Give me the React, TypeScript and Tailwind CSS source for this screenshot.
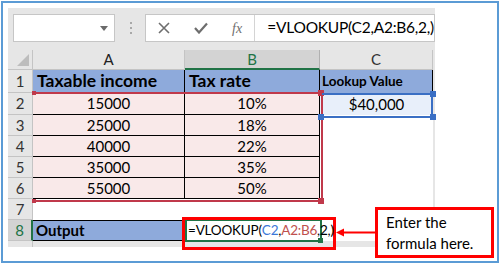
import React from "react";

const F = { fontFamily: "Lato, 'Open Sans', sans-serif" };

function Triangle() {
  return (
    <svg width="8" height="5" viewBox="0 0 8 5">
      <polygon points="0,0 8,0 4,5" fill="#6b6b6b" />
    </svg>
  );
}

export default function App() {
  const rows = [
    ["15000", "10%"],
    ["25000", "18%"],
    ["40000", "22%"],
    ["35000", "35%"],
    ["55000", "50%"],
  ];
  const rh = "bg-[#e6e6e6] border-r border-b border-[#c4c4c4] flex items-center justify-center text-[15px] text-[#333]";
  return (
    <div className="w-[502px] h-[268px] bg-white relative overflow-hidden" style={F}>
      <div className="ml-[1px] mt-[1px] w-[498px] h-[262px] border-2 border-[#5b9bd5] pl-[5px] pt-[5px]">
        <div className="w-[427px] h-[239px] bg-[#e6e6e6] flex flex-col">
          {/* formula bar */}
          <div className="h-[42px] flex items-start pt-[6px] pl-[5px] shrink-0">
            <div className="w-[102px] h-[28px] bg-white border border-[#c6c6c6] flex items-center justify-end pr-[6px]">
              <Triangle />
            </div>
            <div className="w-[30px] h-[28px] flex flex-col items-center justify-center gap-[3px] pl-[1px]">
              <span className="w-[2px] h-[2px] bg-[#a8a8a8]" />
              <span className="w-[2px] h-[2px] bg-[#a8a8a8]" />
              <span className="w-[2px] h-[2px] bg-[#a8a8a8]" />
            </div>
            <div className="w-[290px] h-[28px] bg-white border border-[#c6c6c6] flex">
              <div className="w-[112px] h-full border-r border-[#d4d4d4] relative">
                <svg className="absolute left-[12px] top-[7px]" width="12" height="12" viewBox="0 0 12 12">
                  <path d="M1 1 L11 11 M11 1 L1 11" stroke="#6e6e6e" strokeWidth="1.6" />
                </svg>
                <svg className="absolute left-[48px] top-[7px]" width="14" height="12" viewBox="0 0 14 12">
                  <path d="M1 6 L5 10.5 L13 1.5" stroke="#6e6e6e" strokeWidth="2.2" fill="none" />
                </svg>
                <span className="absolute left-[86px] top-[3px] italic text-[14px] text-[#6e6e6e]" style={{ fontFamily: "'Liberation Serif', serif" }}>
                  fx
                </span>
              </div>
              <div className="flex-1 pl-[12px] flex items-center text-[15.5px] tracking-[-0.25px] text-black whitespace-nowrap">
                =VLOOKUP(C2,A2:B6,2,)
              </div>
            </div>
          </div>
          {/* grid */}
          <div className="grid grid-cols-[25px_152px_135px_113px] grid-rows-[20px_23px_22px_21px_21px_21px_21px_21px_21px] shrink-0">
            {/* header row */}
            <div className="bg-[#e6e6e6] border-r border-b border-[#c4c4c4] relative">
              <svg className="absolute right-[3px] bottom-[3px]" width="12" height="12" viewBox="0 0 12 12">
                <polygon points="12,0 12,12 0,12" fill="#bdbdbd" />
              </svg>
            </div>
            <div className="bg-[#e6e6e6] border-r border-b border-[#c4c4c4] flex items-center justify-center text-[15px] text-[#222]">A</div>
            <div className="bg-[#d3d3d3] border-r border-[#b0b0b0] border-b-2 border-b-[#217346] flex items-center justify-center text-[15px] text-[#217346]">B</div>
            <div className="bg-[#e6e6e6] border-r border-b border-[#c4c4c4] flex items-center justify-center text-[15px] text-[#333]">C</div>

            {/* row 1 */}
            <div className={rh}>1</div>
            <div className="bg-[#8eaadb] border-r border-black flex items-center pl-[4px] font-bold text-[17.5px] text-black">Taxable income</div>
            <div className="bg-[#8eaadb] border-r border-black flex items-center pl-[4px] font-bold text-[17.5px] text-black">Tax rate</div>
            <div className="bg-[#8eaadb] border-r border-black flex items-center pl-[2px] font-bold text-[13.5px] text-black">Lookup Value</div>

            {rows.map((r, i) => (
              <React.Fragment key={i}>
                <div className={rh}>{i + 2}</div>
                <div className="bg-[#f9e9e9] border-r border-b border-black flex items-center justify-center text-[15px] text-black">{r[0]}</div>
                <div className="bg-[#f9e9e9] border-r border-b border-black flex items-center justify-center text-[15px] text-black">{r[1]}</div>
                {i === 0 ? (
                  <div className="bg-[#e8effa] flex items-center justify-center text-[15px] text-black">$40,000</div>
                ) : (
                  <div className="bg-white" />
                )}
              </React.Fragment>
            ))}

            {/* row 7 */}
            <div className={rh}>7</div>
            <div className="bg-white" />
            <div className="bg-white" />
            <div className="bg-white" />

            {/* row 8 */}
            <div className="bg-[#d3d3d3] border-r-2 border-r-[#217346] border-b border-[#c4c4c4] flex items-center justify-center text-[15px] text-[#217346]">8</div>
            <div className="bg-[#8eaadb] border-y border-black flex items-center pl-[3px] font-bold text-[15px] text-black">Output</div>
            <div className="bg-white relative">
              <div className="absolute left-[3px] top-0 h-full flex items-center whitespace-nowrap text-[13.5px] tracking-[-0.2px] text-black z-10">
                <span>=VLOOKUP(</span>
                <span className="text-[#3c78d8]">C2</span>
                <span>,</span>
                <span className="text-[#c0504d]">A2:B6</span>
                <span>,2,)</span>
              </div>
            </div>
            <div className="bg-white" />
          </div>
          <div className="flex-1 flex">
            <div className="w-[25px] h-full bg-[#e6e6e6] border-r border-[#c4c4c4]" />
          </div>
        </div>
      </div>

      {/* red range A2:B6 */}
      <div className="absolute left-[33px] top-[92px] w-[290px] h-[110px] border-2 border-l-0 border-[#c0394b] pointer-events-none" />
      <div className="absolute left-[32px] top-[91px] w-[4px] h-[4px] bg-[#c0394b]" />
      <div className="absolute left-[318px] top-[90px] w-[6px] h-[6px] bg-[#c0394b]" />
      <div className="absolute left-[32px] top-[199px] w-[4px] h-[4px] bg-[#c0394b]" />
      <div className="absolute left-[318px] top-[198px] w-[6px] h-[6px] bg-[#c0394b]" />

      {/* blue range C2 */}
      <div className="absolute left-[322px] top-[93px] w-[111px] h-[25px] border-2 border-l-0 border-[#3a6fc4] pointer-events-none" />
      <div className="absolute left-[430px] top-[91px] w-[6px] h-[6px] bg-[#3a6fc4]" />
      <div className="absolute left-[318px] top-[114px] w-[6px] h-[6px] bg-[#3a6fc4]" />
      <div className="absolute left-[430px] top-[114px] w-[6px] h-[6px] bg-[#3a6fc4]" />

      {/* active cell B8 */}
      <div className="absolute left-[185px] top-[219px] w-[137px] h-[23px] border-2 border-[#217346] pointer-events-none" />
      <div className="absolute left-[318px] top-[238px] w-[5px] h-[5px] bg-[#217346]" />

      {/* annotation box around B8 */}
      <div className="absolute left-[182px] top-[217px] w-[154px] h-[33px] border-[3px] border-[#ff0000] pointer-events-none" />

      {/* arrow */}
      <svg className="absolute left-[335px] top-[226px]" width="42" height="13" viewBox="0 0 42 13">
        <line x1="7" y1="6.5" x2="42" y2="6.5" stroke="#ff0000" strokeWidth="2" />
        <polygon points="1,6.5 9,2.5 9,10.5" fill="#ff0000" />
      </svg>

      {/* callout */}
      <div className="absolute left-[375px] top-[207px] w-[119px] h-[51px] border-[3px] border-[#ff0000] bg-white pl-[8px] pt-[2px] text-[15px] leading-[21px] text-black">
        <div>Enter the</div>
        <div>formula here.</div>
      </div>
    </div>
  );
}
